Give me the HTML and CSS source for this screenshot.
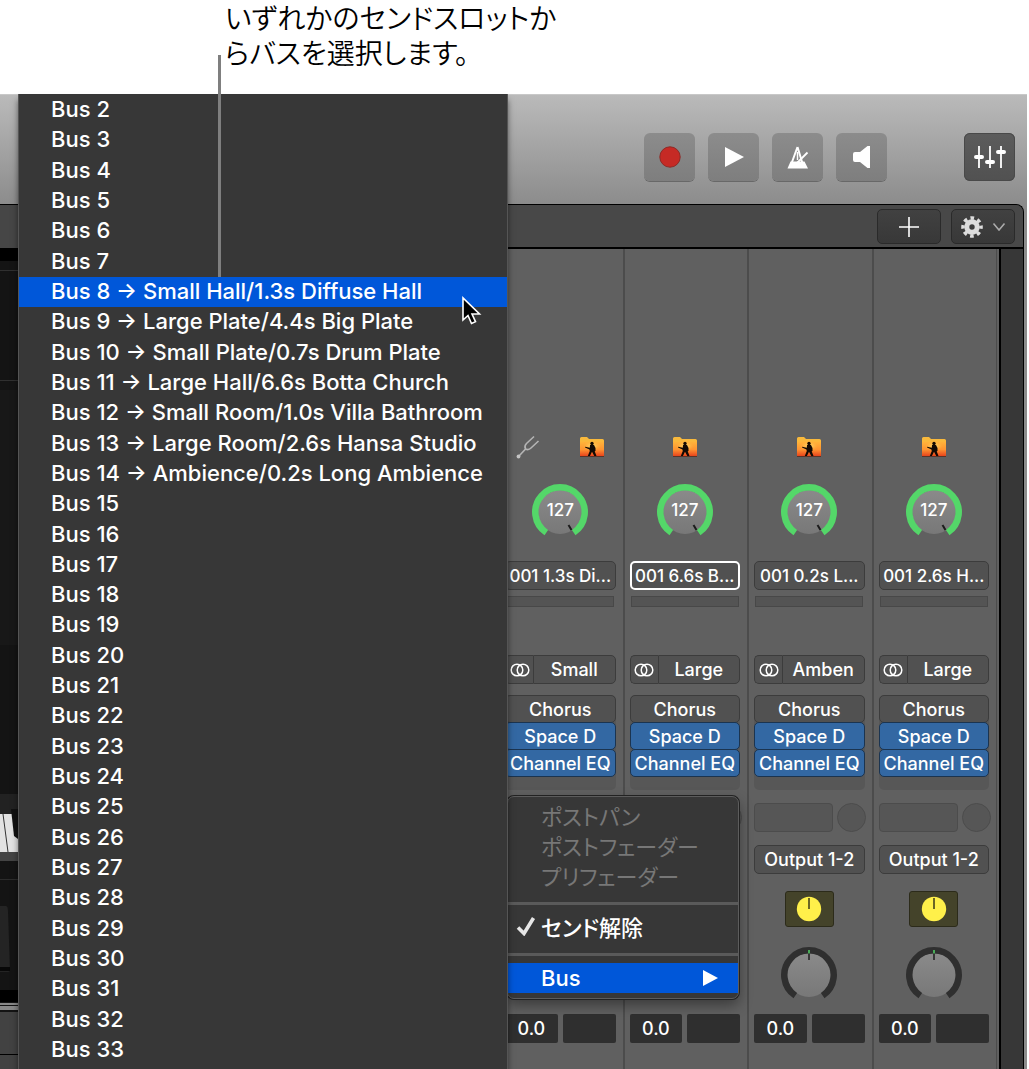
FILE: index.html
```
<!DOCTYPE html>
<html lang="ja">
<head>
  <meta charset="UTF-8">
  <meta name="viewport" content="width=device-width, initial-scale=1.0">
  <title>センドスロットのバスメニュー</title>
  <link rel="stylesheet" href="styles.css">
</head>
<body>
  <svg class="defs" width="0" height="0" aria-hidden="true">
    <defs>
      <linearGradient id="sunset" x1="0" y1="0" x2="0" y2="1">
        <stop offset="0" stop-color="#ffb53a"/>
        <stop offset="0.55" stop-color="#ff9431"/>
        <stop offset="1" stop-color="#e8441c"/>
      </linearGradient>
      <radialGradient id="sun" cx="0.5" cy="0.5" r="0.5">
        <stop offset="0" stop-color="#ffe27a"/>
        <stop offset="1" stop-color="#ffb53a" stop-opacity="0"/>
      </radialGradient>
      <linearGradient id="cap" x1="0" y1="0" x2="0" y2="1">
        <stop offset="0" stop-color="#8a8a8a"/>
        <stop offset="1" stop-color="#787878"/>
      </linearGradient>
      <symbol id="folder" viewBox="0 0 26 22">
        <path d="M1 2.500Q1 1 2.500 1H8l2 2h13.500Q25 3 25 4.500V19H1z" fill="#f9b93c"/>
        <path d="M1 5.500h24V20H1z" fill="url(#sunset)"/>
        <ellipse cx="13" cy="10" rx="9" ry="5" fill="url(#sun)"/>
        <path d="M1 20.500h24" stroke="#5a3428" stroke-width="1"/>
        <circle cx="13" cy="7.500" r="1.700" fill="#120a04"/>
        <path d="M11 9h4l1.500 3v3l-.8.300 1.800 4.700h-2.200L13 15.800 10.900 20H8.800l2-5-.4-1.400L6 11.600l.2-.8 4.600 1z" fill="#120a04"/>
      </symbol>
      <symbol id="send-knob" viewBox="0 0 56 54">
        <circle cx="28" cy="28" r="22" fill="url(#cap)"/>
        <path d="M14.300 48.600A24.700 24.700 0 1 1 41.700 48.600" fill="none" stroke="#54d769" stroke-width="6.500"/>
        <path d="M36.500 41l3 5" stroke="#1c1c1c" stroke-width="2"/>
      </symbol>
      <symbol id="pan-knob" viewBox="0 0 56 54">
        <circle cx="28" cy="28" r="22" fill="url(#cap)"/>
        <path d="M14.300 48.600A24.700 24.700 0 1 1 41.700 48.600" fill="none" stroke="#2f2f2f" stroke-width="6.500"/>
        <path d="M28 6v7" stroke="#1c1c1c" stroke-width="1.500"/>
        <path d="M28 3v3.500" stroke="#54d769" stroke-width="1.500"/>
      </symbol>
      <symbol id="stereo" viewBox="0 0 20 14">
        <circle cx="7" cy="7" r="5.800" fill="none" stroke="#fff" stroke-width="1.500"/>
        <circle cx="13" cy="7" r="5.800" fill="none" stroke="#fff" stroke-width="1.500"/>
      </symbol>
      <symbol id="auto" viewBox="0 0 26 26">
        <circle cx="13" cy="13" r="12.200" fill="#fff04a"/>
        <path d="M13 2v11" stroke="#3a3818" stroke-width="1.500"/>
      </symbol>
    </defs>
  </svg>

  <p class="caption">いずれかのセンドスロットか<br>らバスを選択します。</p>

  <main class="window">
    <div class="toolbar">
      <div class="transport">
        <button class="tool" aria-label="Record"><svg width="22" height="22" viewBox="0 0 22 22"><circle cx="11" cy="11" r="10.200" fill="#c62a25" stroke="#8f2a26" stroke-width="1"/></svg></button>
        <button class="tool" aria-label="Play"><svg width="22" height="22" viewBox="0 0 22 22"><path d="M2 1l19 10L2 21z" fill="#fff"/></svg></button>
        <button class="tool" aria-label="Metronome"><svg width="22" height="24" viewBox="0 0 22 24"><path d="M10.500 2L4.500 18.500M10.500 2l5 16.500" fill="none" stroke="#fff" stroke-width="2"/><path d="M10.500 7v8" stroke="#fff" stroke-width="1.500"/><path d="M10 18L20.500 7.500" stroke="#fff" stroke-width="1.800"/><path d="M3.500 16.500h14L21 23.500H.500z" fill="#fff"/></svg></button>
        <button class="tool" aria-label="Speaker"><svg width="20" height="24" viewBox="0 0 20 24"><path d="M3 7h5l7.500-6H18v22h-2.500L8 17H3q-2 0-2-2V9q0-2 2-2z" fill="#fff"/></svg></button>
      </div>
      <button class="tool tool-on" aria-label="Mixer"><svg width="34" height="24" viewBox="0 0 34 24"><path d="M6 1v22M17 1v22M28 1v22" stroke="#fff" stroke-width="1.800"/><path d="M3 12h6M14 17h6M25 7h6" stroke="#fff" stroke-width="4" stroke-linecap="round"/></svg></button>
    </div>

    <div class="workspace">
      <div class="backdrop">
        <svg class="piano" viewBox="0 0 18 865" preserveAspectRatio="none" aria-hidden="true">
          <path d="M0 0h18v865H0z" fill="#141414"/>
          <path d="M0 0h18v44H0z" fill="#464646"/>
          <path d="M0 0h18v1H0zM0 44h18v13H0z" fill="#000"/>
          <path d="M0 66h18v1H0zM0 176h18v1H0z" fill="#303030"/>
          <path d="M0 186h18v255H0z" fill="#181818"/>
          <path d="M0 590h18v20H0z" fill="#222"/>
          <path d="M0 610h18v38H0z" fill="#e2e2e2"/>
          <path d="M11 605h7v30l-4-3z" fill="#111"/>
          <path d="M3 610l5 38" stroke="#333" stroke-width="1"/>
          <path d="M0 648h18v9H0z" fill="#444"/>
          <path d="M0 675h18v1H0z" fill="#2c2c2c"/>
          <path d="M0 702h6q2 0 2 6l2 58q0 2-3 2H0z" fill="#242424"/>
          <path d="M0 763h10v4H0z" fill="#080808"/>
          <path d="M0 786h18v12H0z" fill="#000"/>
          <path d="M0 799h18v2H0zM0 802h18v4H0z" fill="#888"/>
          <path d="M0 808h18v57H0z" fill="#424242"/>
          <path d="M0 850h18v1H0z" fill="#000"/>
        </svg>
      </div>

      <section class="mixer">
        <div class="mixer-bar">
          <button class="bar-button" aria-label="Add"><svg width="20" height="20" viewBox="0 0 20 20"><path d="M10 0v20M0 10h20" stroke="#fff" stroke-width="1.600"/></svg></button>
          <button class="bar-button" aria-label="Settings">
            <svg width="22" height="22" viewBox="0 0 22 22"><circle cx="11" cy="11" r="5.200" fill="none" stroke="#ddd" stroke-width="5"/><circle cx="11" cy="11" r="9" fill="none" stroke="#ddd" stroke-width="3.600" stroke-dasharray="3.600 3.469" stroke-dashoffset="1.800"/></svg>
            <svg width="14" height="10" viewBox="0 0 14 10"><path d="M1.500 1.500L7 8l5.500-6.500" fill="none" stroke="#aaa" stroke-width="1.600"/></svg>
          </button>
        </div>

        <div class="strips">
          <div class="strip">
            <div class="icons">
              <svg width="26" height="26" viewBox="0 0 26 26"><path d="M4 22l6.500-7Q9 12 11.500 9.500L19 2.500M10.500 15q3 1.500 5.500-1L23.500 7" fill="none" stroke="#b4b4b4" stroke-width="1.600"/><circle cx="3.500" cy="22.500" r="1.900" fill="#c4c4c4"/></svg>
              <svg width="26" height="22"><use href="#folder"/></svg>
            </div>
            <div class="knob"><svg width="56" height="54"><use href="#send-knob"/></svg><span class="knob-value">127</span></div>
            <button class="slot setting">001 1.3s Di...</button>
            <div class="eq"></div>
            <div class="format"><button class="slot" aria-label="Stereo"><svg width="20" height="14"><use href="#stereo"/></svg></button><button class="slot">Small</button></div>
            <div class="inserts"><button class="slot">Chorus</button><button class="slot active">Space D</button><button class="slot active">Channel EQ</button></div>
            <div class="send"><span class="send-slot"></span><span class="send-dot"></span></div>
            <button class="slot output" aria-label="Output"></button>
            <button class="auto" aria-label="Automation"><svg width="26" height="26"><use href="#auto"/></svg></button>
            <div class="knob pan"><svg width="56" height="54"><use href="#pan-knob"/></svg></div>
            <div class="levels"><span>0.0</span><span></span></div>
          </div>

          <div class="strip">
            <div class="icons"><svg width="26" height="22"><use href="#folder"/></svg></div>
            <div class="knob"><svg width="56" height="54"><use href="#send-knob"/></svg><span class="knob-value">127</span></div>
            <button class="slot setting focused">001 6.6s B...</button>
            <div class="eq"></div>
            <div class="format"><button class="slot" aria-label="Stereo"><svg width="20" height="14"><use href="#stereo"/></svg></button><button class="slot">Large</button></div>
            <div class="inserts"><button class="slot">Chorus</button><button class="slot active">Space D</button><button class="slot active">Channel EQ</button></div>
            <div class="send"><span class="send-slot"></span><span class="send-dot"></span></div>
            <button class="slot output" aria-label="Output"></button>
            <button class="auto" aria-label="Automation"><svg width="26" height="26"><use href="#auto"/></svg></button>
            <div class="knob pan"><svg width="56" height="54"><use href="#pan-knob"/></svg></div>
            <div class="levels"><span>0.0</span><span></span></div>
          </div>

          <div class="strip">
            <div class="icons"><svg width="26" height="22"><use href="#folder"/></svg></div>
            <div class="knob"><svg width="56" height="54"><use href="#send-knob"/></svg><span class="knob-value">127</span></div>
            <button class="slot setting">001 0.2s L...</button>
            <div class="eq"></div>
            <div class="format"><button class="slot" aria-label="Stereo"><svg width="20" height="14"><use href="#stereo"/></svg></button><button class="slot">Amben</button></div>
            <div class="inserts"><button class="slot">Chorus</button><button class="slot active">Space D</button><button class="slot active">Channel EQ</button></div>
            <div class="send"><span class="send-slot"></span><span class="send-dot"></span></div>
            <button class="slot output">Output 1-2</button>
            <button class="auto" aria-label="Automation"><svg width="26" height="26"><use href="#auto"/></svg></button>
            <div class="knob pan"><svg width="56" height="54"><use href="#pan-knob"/></svg></div>
            <div class="levels"><span>0.0</span><span></span></div>
          </div>

          <div class="strip">
            <div class="icons"><svg width="26" height="22"><use href="#folder"/></svg></div>
            <div class="knob"><svg width="56" height="54"><use href="#send-knob"/></svg><span class="knob-value">127</span></div>
            <button class="slot setting">001 2.6s H...</button>
            <div class="eq"></div>
            <div class="format"><button class="slot" aria-label="Stereo"><svg width="20" height="14"><use href="#stereo"/></svg></button><button class="slot">Large</button></div>
            <div class="inserts"><button class="slot">Chorus</button><button class="slot active">Space D</button><button class="slot active">Channel EQ</button></div>
            <div class="send"><span class="send-slot"></span><span class="send-dot"></span></div>
            <button class="slot output">Output 1-2</button>
            <button class="auto" aria-label="Automation"><svg width="26" height="26"><use href="#auto"/></svg></button>
            <div class="knob pan"><svg width="56" height="54"><use href="#pan-knob"/></svg></div>
            <div class="levels"><span>0.0</span><span></span></div>
          </div>
        </div>
      </section>
    </div>

    <div class="send-menu" role="menu">
      <button class="item" role="menuitem" disabled>ポストパン</button>
      <button class="item" role="menuitem" disabled>ポストフェーダー</button>
      <button class="item" role="menuitem" disabled>プリフェーダー</button>
      <hr>
      <button class="item checked" role="menuitem"><svg width="20" height="20" viewBox="0 0 20 20"><path d="M2 11.500l6 6L17.500 2" fill="none" stroke="#e6e6e6" stroke-width="3.600"/></svg>センド解除</button>
      <hr>
      <button class="item selected" role="menuitem">Bus<svg width="15" height="16" viewBox="0 0 15 16"><path d="M0 0l15 8-15 8z" fill="#fff"/></svg></button>
    </div>

    <div class="bus-menu" role="menu">
      <button class="item" role="menuitem">Bus 2</button>
      <button class="item" role="menuitem">Bus 3</button>
      <button class="item" role="menuitem">Bus 4</button>
      <button class="item" role="menuitem">Bus 5</button>
      <button class="item" role="menuitem">Bus 6</button>
      <button class="item" role="menuitem">Bus 7</button>
      <button class="item selected" role="menuitem">Bus 8 → Small Hall/1.3s Diffuse Hall</button>
      <button class="item" role="menuitem">Bus 9 → Large Plate/4.4s Big Plate</button>
      <button class="item" role="menuitem">Bus 10 → Small Plate/0.7s Drum Plate</button>
      <button class="item" role="menuitem">Bus 11 → Large Hall/6.6s Botta Church</button>
      <button class="item" role="menuitem">Bus 12 → Small Room/1.0s Villa Bathroom</button>
      <button class="item" role="menuitem">Bus 13 → Large Room/2.6s Hansa Studio</button>
      <button class="item" role="menuitem">Bus 14 → Ambience/0.2s Long Ambience</button>
      <button class="item" role="menuitem">Bus 15</button>
      <button class="item" role="menuitem">Bus 16</button>
      <button class="item" role="menuitem">Bus 17</button>
      <button class="item" role="menuitem">Bus 18</button>
      <button class="item" role="menuitem">Bus 19</button>
      <button class="item" role="menuitem">Bus 20</button>
      <button class="item" role="menuitem">Bus 21</button>
      <button class="item" role="menuitem">Bus 22</button>
      <button class="item" role="menuitem">Bus 23</button>
      <button class="item" role="menuitem">Bus 24</button>
      <button class="item" role="menuitem">Bus 25</button>
      <button class="item" role="menuitem">Bus 26</button>
      <button class="item" role="menuitem">Bus 27</button>
      <button class="item" role="menuitem">Bus 28</button>
      <button class="item" role="menuitem">Bus 29</button>
      <button class="item" role="menuitem">Bus 30</button>
      <button class="item" role="menuitem">Bus 31</button>
      <button class="item" role="menuitem">Bus 32</button>
      <button class="item" role="menuitem">Bus 33</button>
    </div>

    <span class="callout-line"></span>
    <svg class="cursor" width="22" height="30" viewBox="0 0 22 30" aria-hidden="true"><path d="M2 2v22l5-4.500 3.500 8 4-1.800L11 18h7.500z" fill="#000" stroke="#fff" stroke-width="1.600"/></svg>
  </main>
</body>
</html>
```
FILE: styles.css
```
* {
  box-sizing: border-box;
}
body {
  margin: 0;
  min-height: 100vh;
  display: flex;
  flex-direction: column;
  background: #fff;
  font-family: Inter, "Noto Sans CJK JP", sans-serif;
  color: #fff;
}
button {
  margin: 0;
  padding: 0;
  border: none;
  background: none;
  font: inherit;
  color: inherit;
}
svg {
  display: block;
  flex: none;
}
.defs {
  position: absolute;
}
.caption {
  height: 94px;
  margin: 0;
  padding-left: 225px;
  font-family: "Noto Sans CJK JP", sans-serif;
  font-size: 28px;
  font-weight: 350;
  font-feature-settings: "palt";
  line-height: 35px;
  color: #000;
}
.window {
  position: relative;
  flex: 1;
  display: flex;
  flex-direction: column;
  margin-right: 2px;
  background: #8c8c8c;
}

/* toolbar */
.toolbar {
  height: 110px;
  display: flex;
  justify-content: flex-end;
  gap: 77px;
  padding: 38px 12px 0 0;
  background: linear-gradient(#bababa, #8c8c8c);
  border-top: 1px solid #c8c8c8;
}
.transport {
  display: flex;
  gap: 13px;
}
.tool {
  width: 51px;
  height: 48px;
  display: flex;
  align-items: center;
  justify-content: center;
  border-radius: 6px;
  background: linear-gradient(#8c8c8c, #7e7e7e);
  box-shadow: 0 1px 0 #686868;
}
.tool-on {
  background: linear-gradient(#5c5c5c, #515151);
  box-shadow: inset 0 0 0 1px #494949;
}

/* mixer */
.workspace {
  flex: 1;
  display: flex;
}
.backdrop {
  position: relative;
  width: 18px;
}
.piano {
  position: absolute;
  width: 100%;
  height: 100%;
}
.mixer {
  flex: 1;
  display: flex;
  flex-direction: column;
  margin-right: 3px;
  border: 1px solid #000;
  border-bottom: none;
  border-top-right-radius: 8px;
  background: #373737;
  overflow: hidden;
}
.mixer-bar {
  height: 44px;
  display: flex;
  justify-content: flex-end;
  gap: 10px;
  padding: 4px 8px 0 0;
  background: #484848;
  border-bottom: 2px solid #000;
}
.bar-button {
  width: 64px;
  height: 35px;
  display: flex;
  align-items: center;
  justify-content: center;
  gap: 9px;
  border: 1px solid #2a2a2a;
  border-radius: 5px;
  background: linear-gradient(#414141, #383838);
}
.strips {
  flex: 1;
  display: grid;
  grid-template-columns: repeat(4, minmax(0, 1fr));
  margin-right: 22px;
  padding: 0 3px 0 479px;
  border-right: 2px solid #000;
  background: #606060;
}
.strip {
  display: flex;
  flex-direction: column;
  align-items: center;
  padding: 187px 7px 0 5px;
  border-left: 2px solid #4c4c4c;
  font-size: 18px;
  font-weight: 500;
}
.strip:last-child {
  box-shadow: 1px 0 0 #4c4c4c;
}
.icons {
  display: flex;
  align-items: center;
  gap: 38px;
  height: 22px;
}
.knob {
  position: relative;
  height: 54px;
  margin-top: 26px;
}
.knob-value {
  position: absolute;
  inset: 0;
  text-align: center;
  font-size: 17px;
  line-height: 53px;
}
.slot {
  width: 100%;
  height: 29px;
  display: flex;
  align-items: center;
  justify-content: center;
  white-space: nowrap;
  border: 1px solid #3c3c3c;
  border-radius: 5px;
  background: #515151;
}
.setting {
  margin-top: 23px;
  font-size: 17px;
}
.focused {
  border: 2px solid #fff;
}
.eq {
  width: 98%;
  height: 11px;
  margin-top: 6px;
  border: 1px solid #484848;
  background: #545454;
}
.format {
  width: 100%;
  display: flex;
  margin-top: 48px;
}
.format .slot:first-child {
  width: 28px;
  flex: none;
  border-right: none;
  border-radius: 5px 0 0 5px;
}
.format .slot:last-child {
  border-radius: 0 5px 5px 0;
}
.inserts {
  width: 100%;
  margin-top: 11px;
  padding-bottom: 14px;
  border-radius: 5px;
  background: #575757;
}
.inserts .slot {
  height: 28px;
  margin-bottom: -1px;
}
.inserts .active {
  border-color: #1b3450;
  background: #3368a3;
}
.send {
  width: 100%;
  display: flex;
  gap: 4px;
  margin-top: 13px;
}
.send-slot {
  flex: none;
  width: 79px;
  height: 29px;
  border: 1px solid #4c4c4c;
  border-radius: 4px;
  background: #565656;
}
.send-dot {
  flex: none;
  width: 29px;
  height: 29px;
  border: 1px solid #4c4c4c;
  border-radius: 50%;
  background: #565656;
}
.output {
  margin-top: 13px;
}
.auto {
  width: 49px;
  height: 36px;
  display: flex;
  align-items: center;
  justify-content: center;
  margin-top: 17px;
  border: 1px solid #2c2b1a;
  border-radius: 3px;
  background: #44432a;
}
.pan {
  margin-top: 20px;
}
.levels {
  width: 100%;
  display: grid;
  grid-template-columns: 1fr 1fr;
  gap: 5px;
  margin-top: 13px;
  text-align: center;
  line-height: 29px;
}
.levels span {
  height: 29px;
  border-radius: 2px;
  background: #2f2f2f;
}

/* menus */
.item {
  display: flex;
  align-items: center;
  width: 100%;
  text-align: left;
  white-space: nowrap;
}
.item.selected {
  background: #0057d9;
}
.bus-menu {
  position: absolute;
  top: 0;
  bottom: 0;
  left: 18px;
  width: 490px;
  display: flex;
  flex-direction: column;
  padding: 1px 0 4px;
  border-left: 1px solid #555;
  border-right: 1px solid #555;
  background: #373737;
  box-shadow: 0 6px 6px rgba(0,0,0,0.5);
  font-size: 22px;
  font-weight: 500;
}
.bus-menu .item {
  flex: 1;
  padding: 0 0 2px 32px;
}
.send-menu {
  position: absolute;
  top: 702px;
  left: 507px;
  width: 232px;
  padding: 4px 0 5px;
  border: 1px solid #5c5c5c;
  border-radius: 7px;
  background: #373737;
  box-shadow: 0 0 0 1px #222, 0 6px 14px rgba(0,0,0,0.4);
  font-size: 22px;
  font-weight: 500;
  font-feature-settings: "palt";
}
.send-menu .item {
  height: 30px;
  padding: 0 0 3px 33px;
}
.send-menu .item:disabled {
  color: #777;
  font-weight: 400;
}
.send-menu .checked {
  gap: 5px;
  padding-left: 8px;
}
.send-menu .selected {
  justify-content: space-between;
  padding: 0 20px 0 33px;
}
.send-menu hr {
  height: 3px;
  margin: 11px 0 7px;
  border: none;
  background: #5a5a5a;
}

.callout-line {
  position: absolute;
  top: -39px;
  left: 218px;
  width: 3px;
  height: 222px;
  background: #7f7f7f;
}
.cursor {
  position: absolute;
  top: 202px;
  left: 461px;
}
```
